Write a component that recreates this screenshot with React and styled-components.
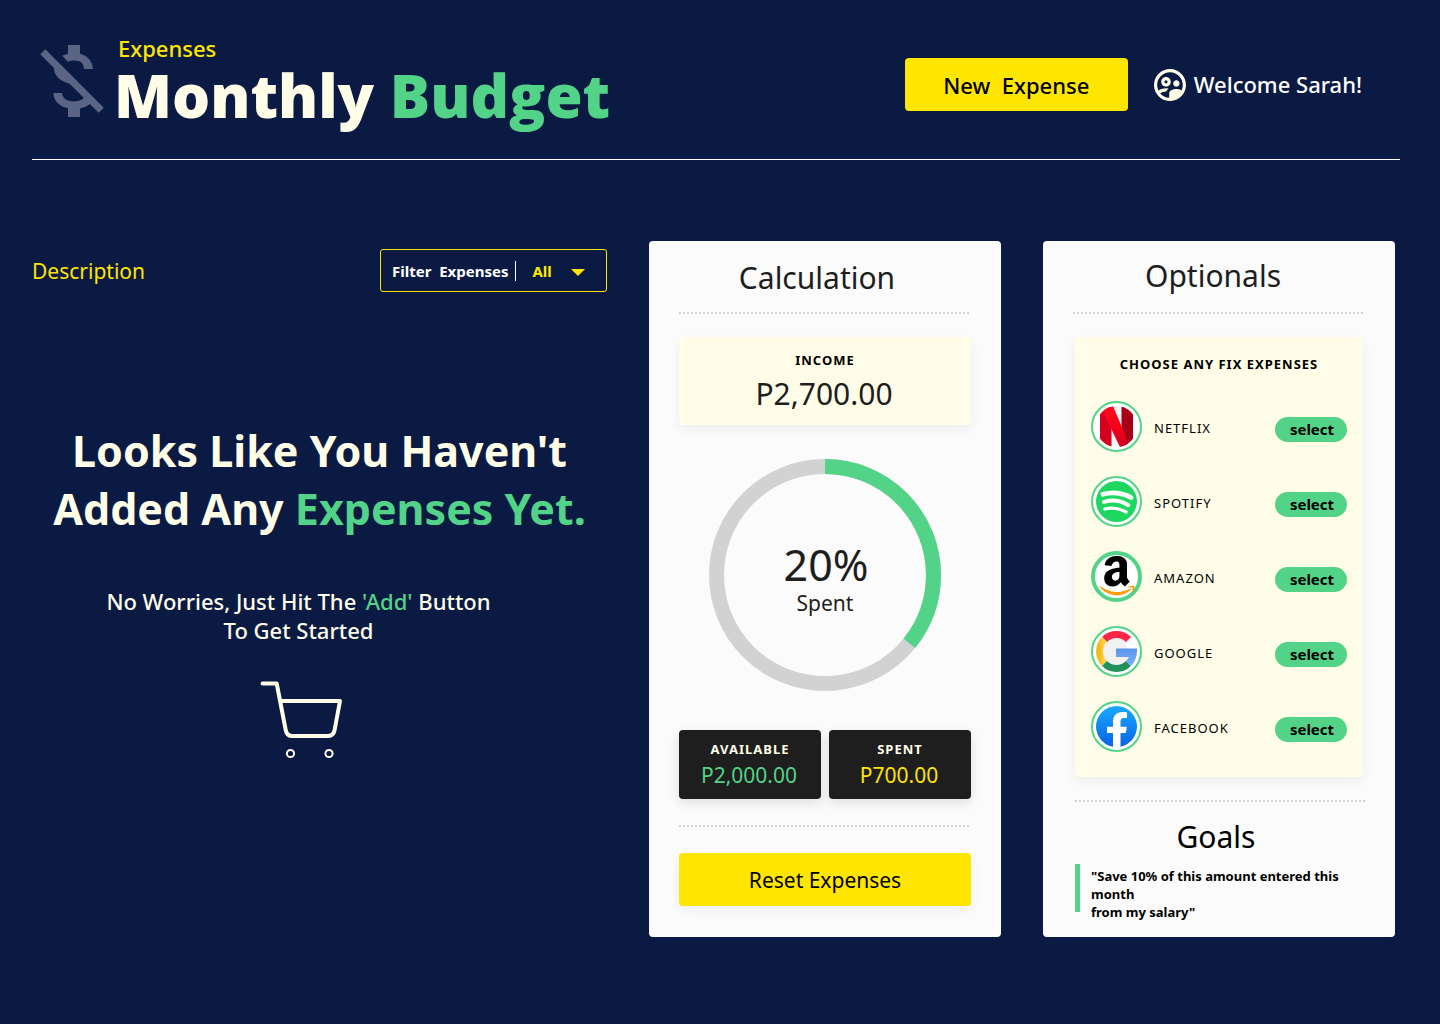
import React from "react";
import styled, { createGlobalStyle } from "styled-components";
import { MdOutlineSupervisedUserCircle } from "react-icons/md";

const GlobalStyle = createGlobalStyle`
  *, *::before, *::after { box-sizing: border-box; }
  body { margin: 0; background: #0a1a42; }
  body, button, select { font-family: "Noto Sans", "Open Sans", sans-serif; }
  h1, h2, p, ul, figure { margin: 0; padding: 0; }
`;

const Page = styled.div`
  min-height: 100vh;
  padding: 0 40px 40px 32px;
  color: #fffde8;
  font-size: 21px;
  line-height: 29px;
`;

const Header = styled.header`
  display: flex;
  justify-content: space-between;
  padding: 34px 38px 31px 8px;
  border-bottom: 1px solid #fff;
`;

const Brand = styled.div`
  display: flex;
  align-items: center;
  gap: 10px;
`;

const BrandIcon = styled.svg`
  width: 64px;
  height: 72px;
  fill: #5a6484;
`;

const Eyebrow = styled.p`
  padding-left: 4px;
  color: #ffe600;
  font-size: 22px;
  line-height: 28px;
  font-weight: 500;
`;

const PageTitle = styled.h1`
  font-family: "Open Sans", "Noto Sans", sans-serif;
  font-size: 60px;
  line-height: 66px;
  font-weight: 800;
`;

const Accent = styled.span`
  color: #52d388;
`;

const Actions = styled.div`
  display: flex;
  align-items: center;
  gap: 26px;
  padding-top: 7px;
`;

const YellowButton = styled.button`
  width: ${(p) => p.$width};
  height: 53px;
  padding: 0;
  border: 0;
  border-radius: 4px;
  background: #ffe600;
  color: #000;
  font-size: ${(p) => p.$size};
  font-weight: ${(p) => p.$weight};
  white-space: pre;
  box-shadow: 0 4px 12px rgba(0, 0, 0, 0.06);
  cursor: pointer;
`;

const Welcome = styled.div`
  display: flex;
  align-items: center;
  gap: 8px;
  color: #fff;
  font-size: 22px;
  font-weight: 500;

  svg {
    width: 32px;
    height: 32px;
    color: #fffde8;
  }
`;

const Main = styled.main`
  display: grid;
  grid-template-columns: minmax(0, 1fr) 352px 352px;
  gap: 42px;
  padding: 81px 5px 0 0;
`;

const Toolbar = styled.div`
  display: flex;
  align-items: center;
  justify-content: space-between;
  padding-top: 8px;
`;

const Description = styled.h2`
  padding-top: 2px;
  color: #ffe600;
  font-size: 21px;
  font-weight: 400;
`;

const Filter = styled.div`
  display: flex;
  align-items: center;
  width: 227px;
  height: 43px;
  padding: 0 21px 0 11px;
  border: 1px solid #ffe600;
  border-radius: 3px;
  font-size: 15px;
  font-weight: 700;
`;

const FilterLabel = styled.label`
  padding-right: 7px;
  border-right: 1px solid #fff;
  color: #fff;
  line-height: 20px;
  white-space: pre;
`;

const SelectBox = styled.div`
  flex: 1;
  display: grid;
  align-items: center;
  padding-left: 16px;

  > * { grid-area: 1 / 1; }

  svg {
    justify-self: end;
    width: 14px;
    height: 7px;
    margin-top: 4px;
    fill: #ffe600;
    pointer-events: none;
  }
`;

const FilterSelect = styled.select`
  appearance: none;
  width: 100%;
  padding: 0;
  border: 0;
  background: transparent;
  color: #ffe600;
  font-size: 15px;
  font-weight: 700;
`;

const EmptyState = styled.div`
  padding-top: 130px;
  text-align: center;
`;

const EmptyTitle = styled.h2`
  font-size: 43px;
  line-height: 58px;
  font-weight: 700;
`;

const EmptyHint = styled.div`
  padding: 49px 42px 0 0;
  font-size: 22px;
  font-weight: 500;

  svg {
    display: block;
    width: 90px;
    height: 80px;
    margin: 35px auto 0;
  }
`;

const Card = styled.section`
  padding: ${(p) => p.$padding};
  border-radius: 4px;
  background: #fbfbfb;
  color: #1e1e1e;
`;

const CardTitle = styled.h2`
  padding-right: ${(p) => p.$shift};
  color: ${(p) => p.$color || "#1e1e1e"};
  font-size: 30px;
  line-height: 42px;
  font-weight: 400;
  text-align: center;
`;

const Dots = styled.hr`
  height: 2px;
  margin: ${(p) => p.$margin};
  border: 0;
  background: repeating-linear-gradient(90deg, #d2d2d2 0 2px, transparent 2px 4px);
`;

const Caption = styled.p`
  font-size: 13px;
  line-height: 18px;
  font-weight: 700;
  letter-spacing: 1px;
  text-align: center;
`;

const Income = styled.div`
  height: 88px;
  padding-top: 14px;
  border-radius: 4px;
  background: #fffde8;
  box-shadow: 0 4px 12px rgba(0, 0, 0, 0.06);
  text-align: center;

  ${Caption} { color: #000; }
`;

const IncomeAmount = styled.p`
  padding: 4px 2px 0 0;
  font-size: 30px;
  line-height: 42px;
`;

const Donut = styled.figure`
  display: grid;
  place-items: center;
  margin: 34px 0 39px;

  > * { grid-area: 1 / 1; }

  svg {
    width: 232px;
    height: 232px;
    fill: none;
    stroke-width: 15;
  }
`;

const DonutText = styled.figcaption`
  padding-top: 8px;
  text-align: center;

  strong {
    display: block;
    padding-left: 2px;
    font-size: 43px;
    line-height: 48px;
    font-weight: 400;
  }
`;

const Stats = styled.div`
  display: grid;
  grid-template-columns: 1fr 1fr;
  gap: 8px;
`;

const Stat = styled.div`
  height: 69px;
  padding-top: 10px;
  border-radius: 4px;
  background: #1e1e1e;
  box-shadow: 0 4px 12px rgba(0, 0, 0, 0.12);
  color: #fffde8;
  text-align: center;
`;

const StatAmount = styled.p`
  padding: 3px 2px 0 0;
  color: ${(p) => p.$color};
`;

const FixedList = styled.div`
  height: 440px;
  padding: 18px 16px 0;
  border-radius: 4px;
  background: #fffde8;
  box-shadow: 0 4px 12px rgba(0, 0, 0, 0.06);
  color: #000;
`;

const Rows = styled.ul`
  display: grid;
  gap: 24px;
  padding-top: 28px;
  list-style: none;
`;

const Row = styled.li`
  display: flex;
  align-items: center;
  height: 51px;
`;

const LogoRing = styled.span`
  display: grid;
  place-items: center;
  width: 51px;
  height: 51px;
  border: ${(p) => p.$ring} solid #52d388;
  border-radius: 50%;
  background: #fff;

  svg {
    width: 41px;
    height: 41px;
  }
`;

const RowName = styled.span`
  flex: 1;
  padding: 3px 0 0 12px;
  font-size: 13px;
  line-height: 18px;
  letter-spacing: 1px;
`;

const SelectButton = styled.button`
  width: 72px;
  height: 25px;
  margin-top: 6px;
  padding: 0 0 0 2px;
  border: 0;
  border-radius: 13px;
  background: #52d388;
  color: #000;
  font-size: 15px;
  line-height: 25px;
  font-weight: 700;
  cursor: pointer;
`;

const Goal = styled.div`
  display: flex;
  gap: 11px;
  padding-top: 6px;

  &::before {
    content: "";
    flex: none;
    width: 5px;
    height: 48px;
    background: #52d388;
  }
`;

const GoalText = styled.p`
  padding-top: 3px;
  color: #000;
  font-size: 13px;
  line-height: 18px;
  font-weight: 700;
`;

const NetflixLogo = () => (
  <svg viewBox="0 0 41 41" aria-hidden="true">
    <clipPath id="disc"><circle cx="20.5" cy="20.5" r="20.5" /></clipPath>
    <linearGradient id="nfx" x1="0" y1="0" x2="0" y2="1">
      <stop offset="0" stopColor="#ff0a1e" />
      <stop offset="0.55" stopColor="#f4001c" />
      <stop offset="1" stopColor="#cf001f" />
    </linearGradient>
    <g clipPath="url(#disc)">
      <rect x="4" width="33" height="41" fill="#f3f3f3" />
      <rect x="4" width="11.5" height="41" fill="#d4001f" />
      <rect x="25.5" width="11.5" height="41" fill="#a60017" />
      <path d="M8 0h9l8.5 20L33 41H24L4 0z" fill="url(#nfx)" />
    </g>
  </svg>
);

const SpotifyLogo = () => (
  <svg viewBox="0 0 41 41" aria-hidden="true">
    <circle cx="20.5" cy="20.5" r="20.5" fill="#1ed760" />
    <g fill="none" stroke="#fff" strokeLinecap="round">
      <path d="M7 13.3C16 10.5 27 11.7 35 16.5" strokeWidth="4.8" />
      <path d="M8 20.9C16 18.6 25 19.7 32.2 24.2" strokeWidth="4" />
      <path d="M8.8 28C16 26.2 23 27 30 31" strokeWidth="3.2" />
    </g>
  </svg>
);

const AmazonLogo = () => (
  <svg viewBox="0 0 41 41" aria-hidden="true">
    <path
      transform="translate(0.3 -2.9) scale(0.09)"
      d="M257.2 162.7c-48.7 1.8-169.5 15.5-169.5 117.5 0 109.5 138.3 114 183.5 43.2 6.5 10.2 35.4 37.5 45.3 46.8l56.8-56S341 288.9 341 261.4V114.3C341 89 316.5 32 228.7 32 140.7 32 94 87 94 136.3l73.5 6.8c16.3-49.5 54.2-49.5 54.2-49.5 40.7-.1 35.5 29.8 35.5 69.1zm0 86.8c0 80-84.2 68-84.2 17.2 0-47.2 50.5-56.7 84.2-57.8v40.6z"
    />
    <path
      transform="translate(2.8 0.3) scale(0.081)"
      fill="#ff9900"
      d="M393.2 413c-7.7 10-70 67-174.5 67S34.2 408.5 9.7 379c-6.8-7.7 1-11.3 5.5-8.3C88.5 415.2 203 488.5 387.7 401c7.5-3.7 13.3 2 5.5 12zm39.8 2.2c-6.5 15.8-16 26.8-21.2 31-5.5 4.5-9.5 2.7-6.5-3.8s19.3-46.5 12.7-55c-6.5-8.3-37-4.3-48-3.2-10.8 1-13 2-14-.3-2.3-5.7 21.7-15.5 37.5-17.5 15.7-1.8 41-.8 46 5.7 3.7 5.1 0 27.1-6.5 43.1z"
    />
  </svg>
);

const GoogleLogo = () => (
  <svg viewBox="0 0 41 41" aria-hidden="true">
    <linearGradient id="gy" x1="0" y1="0" x2="1" y2="0">
      <stop offset="0" stopColor="#f5b81f" />
      <stop offset="1" stopColor="#ffd54d" />
    </linearGradient>
    <linearGradient id="gb" x1="0" y1="0" x2="0" y2="1">
      <stop offset="0" stopColor="#5b96ec" />
      <stop offset="1" stopColor="#7aaef6" />
    </linearGradient>
    <circle cx="20.5" cy="20.5" r="15" fill="#f1f1f1" />
    <path d="M30 12h11v5.5H30z" fill="#fff" />
    <g fill="none" strokeWidth="7">
      <path d="M8.5 8.5A17 17 0 0 1 32.5 8.5" stroke="#fb2545" />
      <path d="M8.5 32.5A17 17 0 0 1 8.5 8.5" stroke="url(#gy)" />
      <path d="M32.5 32.5A17 17 0 0 1 8.5 32.5" stroke="#23915a" />
    </g>
    <path d="M20 17.5H41C41.3 24.5 39.3 30.5 35 35L30 30C31.5 28.6 32.5 27.3 33 26H20z" fill="url(#gb)" />
  </svg>
);

const FacebookLogo = () => (
  <svg viewBox="0 0 41 41" aria-hidden="true">
    <linearGradient id="fb" x1="0" y1="0" x2="0" y2="1">
      <stop offset="0" stopColor="#19aaff" />
      <stop offset="1" stopColor="#0664e4" />
    </linearGradient>
    <circle cx="20.5" cy="20.5" r="20.5" fill="url(#fb)" />
    <path
      d="M17 41V27H11V20.7H17V16C17 9.5 20.5 6 26.5 6C28.2 6 30 6.2 31 6.4V12H28C25.3 12 24.5 13.5 24.5 15.5V20.7H30.8L29.8 27H24.5V41z"
      fill="#fff"
    />
  </svg>
);

const services = [
  { name: "NETFLIX", Logo: NetflixLogo },
  { name: "SPOTIFY", Logo: SpotifyLogo },
  { name: "AMAZON", Logo: AmazonLogo, ring: "4px" },
  { name: "GOOGLE", Logo: GoogleLogo },
  { name: "FACEBOOK", Logo: FacebookLogo },
];

export default function App() {
  return (
    <Page>
      <GlobalStyle />
      <Header>
        <Brand>
          <BrandIcon viewBox="4 3 16 18" aria-hidden="true">
            <path d="M12.5 6.9c1.78 0 2.44.85 2.5 2.1h2.21c-.07-1.72-1.12-3.3-3.21-3.81V3h-3v2.16c-.53.12-1.03.3-1.48.54l1.47 1.47c.41-.17.91-.27 1.51-.27zM5.33 4.06L4.06 5.33 7.5 8.77c0 2.08 1.56 3.21 3.91 3.91l3.51 3.51c-.34.48-1.05.91-2.42.91-2.06 0-2.87-.92-2.98-2.1h-2.2c.12 2.19 1.76 3.42 3.68 3.83V21h3v-2.15c.96-.18 1.82-.55 2.45-1.12l2.22 2.22 1.27-1.27L5.33 4.06z" />
          </BrandIcon>
          <div>
            <Eyebrow>Expenses</Eyebrow>
            <PageTitle>Monthly <Accent>Budget</Accent></PageTitle>
          </div>
        </Brand>
        <Actions>
          <YellowButton type="button" $width="223px" $size="22px" $weight={500}>{"New  Expense"}</YellowButton>
          <Welcome>
            <MdOutlineSupervisedUserCircle viewBox="2 2 20 20" aria-hidden="true" />
            Welcome Sarah!
          </Welcome>
        </Actions>
      </Header>

      <Main>
        <div>
          <Toolbar>
            <Description>Description</Description>
            <Filter>
              <FilterLabel htmlFor="filter">{"Filter  Expenses"}</FilterLabel>
              <SelectBox>
                <FilterSelect id="filter" defaultValue="All">
                  <option>All</option>
                </FilterSelect>
                <svg viewBox="0 0 14 7" aria-hidden="true"><path d="M0 0h14L7 7z" /></svg>
              </SelectBox>
            </Filter>
          </Toolbar>
          <EmptyState>
            <EmptyTitle>
              Looks Like You Haven't<br />Added Any <Accent>Expenses Yet.</Accent>
            </EmptyTitle>
            <EmptyHint>
              <p>
                No Worries, Just Hit The <Accent>'Add'</Accent> Button<br />To Get Started
              </p>
              <svg viewBox="-6 0 90 80" fill="none" stroke="#fffde8" aria-hidden="true">
                <path
                  d="M2.5 3.5H16.7L25.7 50C26.6 54.2 28.5 56 32 56H67.5C71.5 56 73.7 54.3 74.5 50.5L80 21H20.5"
                  strokeWidth="4"
                  strokeLinecap="round"
                  strokeLinejoin="round"
                />
                <circle cx="30.5" cy="73.5" r="3.6" strokeWidth="2" />
                <circle cx="69" cy="73.5" r="3.6" strokeWidth="2" />
              </svg>
            </EmptyHint>
          </EmptyState>
        </div>

        <Card $padding="16px 30px 31px">
          <CardTitle $shift="16px">Calculation</CardTitle>
          <Dots $margin="13px 0 23px" />
          <Income>
            <Caption>INCOME</Caption>
            <IncomeAmount>P2,700.00</IncomeAmount>
          </Income>
          <Donut>
            <svg viewBox="0 0 232 232" aria-hidden="true">
              <circle cx="116" cy="116" r="108.5" stroke="#d2d2d2" />
              <circle
                cx="116"
                cy="116"
                r="108.5"
                stroke="#52d388"
                pathLength="360"
                strokeDasharray="129 360"
                transform="rotate(-90 116 116)"
              />
            </svg>
            <DonutText><strong>20%</strong>Spent</DonutText>
          </Donut>
          <Stats>
            <Stat>
              <Caption>AVAILABLE</Caption>
              <StatAmount $color="#52d388">P2,000.00</StatAmount>
            </Stat>
            <Stat>
              <Caption>SPENT</Caption>
              <StatAmount $color="#ffe600">P700.00</StatAmount>
            </Stat>
          </Stats>
          <Dots $margin="26px 0" />
          <YellowButton type="button" $width="100%" $size="21px" $weight={400}>Reset Expenses</YellowButton>
        </Card>

        <Card $padding="14px 32px 0">
          <CardTitle $shift="12px">Optionals</CardTitle>
          <Dots $margin="15px 0 23px -2px" />
          <FixedList>
            <Caption>CHOOSE ANY FIX EXPENSES</Caption>
            <Rows>
              {services.map(({ name, Logo, ring = "2px" }) => (
                <Row key={name}>
                  <LogoRing $ring={ring}><Logo /></LogoRing>
                  <RowName>{name}</RowName>
                  <SelectButton type="button" aria-label={`select ${name}`}>select</SelectButton>
                </Row>
              ))}
            </Rows>
          </FixedList>
          <Dots $margin="23px -2px 14px 0" />
          <CardTitle $shift="6px" $color="#000">Goals</CardTitle>
          <Goal>
            <GoalText>"Save 10% of this amount entered this month<br />from my salary"</GoalText>
          </Goal>
        </Card>
      </Main>
    </Page>
  );
}
